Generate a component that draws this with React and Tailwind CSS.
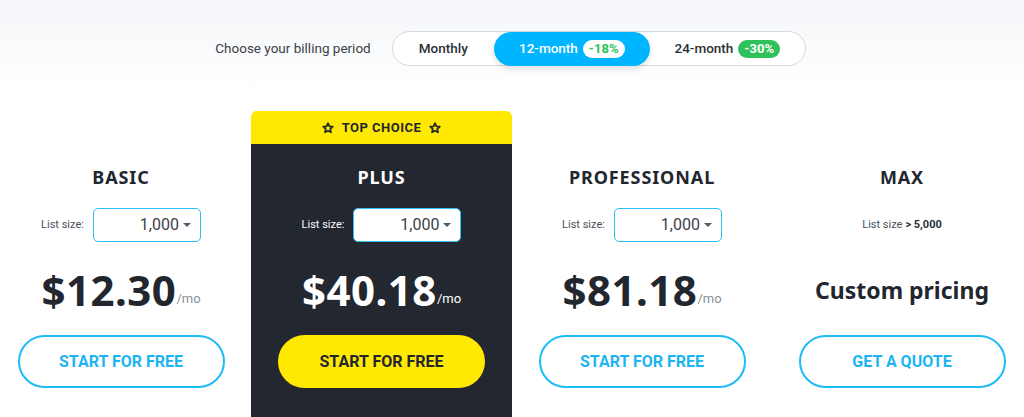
import React, { useState } from 'react';

const plans = [
    { name: 'BASIC', price: '$12.30', cta: 'START FOR FREE' },
    { name: 'PLUS', price: '$40.18', cta: 'START FOR FREE', featured: true },
    { name: 'PROFESSIONAL', price: '$81.18', cta: 'START FOR FREE' },
    { name: 'MAX', custom: true, cta: 'GET A QUOTE' },
];

const Star = () => (
    <svg width="12" height="12" viewBox="0 0 24 24" fill="none" stroke="#22262e" strokeWidth="3.5" strokeLinejoin="round">
        <path d="M12 2.5l2.9 6.1 6.6.8-4.9 4.6 1.3 6.6L12 17.3l-5.9 3.3 1.3-6.6-4.9-4.6 6.6-.8z" />
    </svg>
);

const Caret = () => (
    <svg width="8" height="4" viewBox="0 0 8 4" className="ml-[4px]">
        <path d="M0 0h8L4 4z" fill="#555b63" />
    </svg>
);

const PlanColumn = ({ plan }) => {
    const dark = plan.featured;
    return (
        <div className="flex flex-col">
            {dark ? (
                <div className="h-[33px] bg-[#ffe900] rounded-t-[6px] flex items-center justify-center gap-[8px] text-[13px] font-bold tracking-[0.5px] text-[#22262e]">
                    <Star />
                    <span>TOP CHOICE</span>
                    <Star />
                </div>
            ) : (
                <div className="h-[33px]" />
            )}
            <div className={`flex-1 flex flex-col items-center pt-[21px] ${dark ? 'bg-[#222730]' : ''}`}>
                <h3
                    className={`text-[18px] leading-[24px] font-bold tracking-[0.9px] ${dark ? 'text-white' : 'text-[#22262e]'}`}
                    style={{ fontFamily: '"Noto Sans", sans-serif' }}
                >
                    {plan.name}
                </h3>
                {plan.custom ? (
                    <div className="mt-[19px] h-[34px] flex items-center text-[11px] text-[#4a5059]">
                        List size<span className="ml-[3px] font-bold text-[#2b3038]">&gt; 5,000</span>
                    </div>
                ) : (
                    <div className="mt-[19px] flex items-center gap-[9px]">
                        <span className={`text-[11px] ${dark ? 'text-white' : 'text-[#4a5059]'}`}>List size:</span>
                        <div className="w-[108px] h-[34px] bg-white border border-[#29c0f7] rounded-[5px] flex items-center justify-end pr-[9px] text-[16px] text-[#3c4149]">
                            1,000
                            <Caret />
                        </div>
                    </div>
                )}
                {plan.custom ? (
                    <div
                        className="mt-[24px] h-[48px] flex items-center text-[23px] font-bold text-[#22262e]"
                        style={{ fontFamily: '"Noto Sans", sans-serif' }}
                    >
                        Custom pricing
                    </div>
                ) : (
                    <div className="mt-[24px] h-[48px] flex items-end">
                        <span
                            className={`text-[42px] leading-[48px] font-bold tracking-[0.5px] ${dark ? 'text-white' : 'text-[#22262e]'}`}
                            style={{ fontFamily: '"Noto Sans", sans-serif' }}
                        >
                            {plan.price}
                        </span>
                        <span className={`text-[13px] mb-[6px] ${dark ? 'text-white' : 'text-[#8a9099]'}`}>/mo</span>
                    </div>
                )}
                <button
                    className={`mt-[21px] w-[207px] h-[53px] rounded-full text-[16px] font-bold ${
                        dark ? 'bg-[#ffe900] text-[#22262e]' : 'border-2 border-[#1cbcf8] text-[#1cb4f2]'
                    }`}
                >
                    {plan.cta}
                </button>
            </div>
        </div>
    );
};

export default function App() {
    const [period, setPeriod] = useState('12');

    const tab = (key) =>
        `h-[34px] rounded-full flex items-center justify-center gap-[5px] text-[13.5px] font-medium ${
            period === key ? 'bg-[#00b5ff] text-white shadow-[0_3px_6px_rgba(0,0,0,0.12)]' : 'text-[#2b3038]'
        }`;

    return (
        <div
            className="w-[1024px] h-[417px] overflow-hidden bg-gradient-to-b from-[#f4f6f9] to-white to-[90px]"
            style={{ fontFamily: 'Roboto, "Liberation Sans", sans-serif' }}
        >
            <div className="pt-[31px] flex items-center justify-center gap-[21px] ml-[-3px]">
                <span className="text-[13.5px] text-[#3a3f47]">Choose your billing period</span>
                <div className="w-[414px] h-[35px] rounded-full border border-[#d6d9de] bg-white flex items-center">
                    <button onClick={() => setPeriod('1')} className={`${tab('1')} w-[101px]`}>
                        Monthly
                    </button>
                    <button onClick={() => setPeriod('12')} className={`${tab('12')} w-[156px]`}>
                        12-month
                        <span className="px-[6px] h-[18px] leading-[18px] rounded-full bg-white text-[#2fc15a] text-[13px] font-bold">-18%</span>
                    </button>
                    <button onClick={() => setPeriod('24')} className={`${tab('24')} flex-1`}>
                        24-month
                        <span className="px-[6px] h-[18px] leading-[18px] rounded-full bg-[#2fc15a] text-white text-[13px] font-bold">-30%</span>
                    </button>
                </div>
            </div>
            <div className="mt-[45px] ml-[-9px] w-[1041px] h-[306px] grid grid-cols-[260px_261px_260px_260px]">
                {plans.map((p) => (
                    <PlanColumn key={p.name} plan={p} />
                ))}
            </div>
        </div>
    );
}
